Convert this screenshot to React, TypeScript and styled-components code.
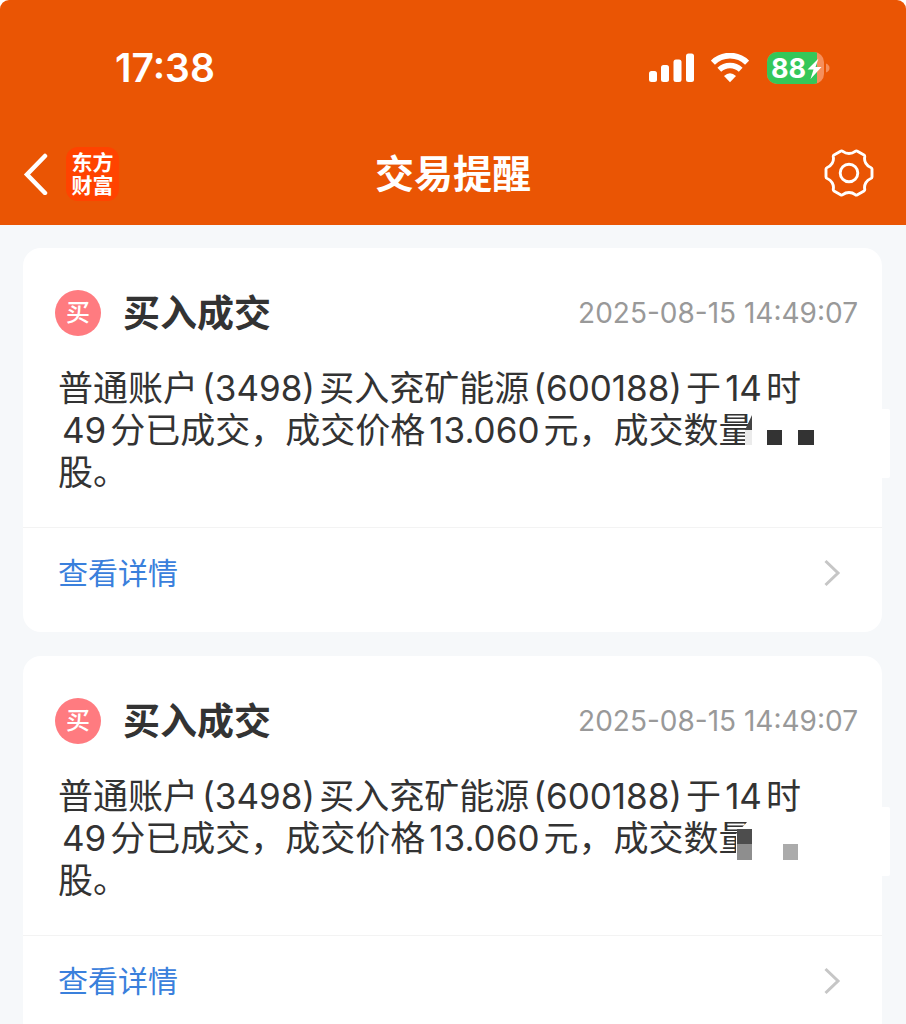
import React from "react";
import styled, { createGlobalStyle } from "styled-components";

const GlobalStyle = createGlobalStyle`
  *, *::before, *::after { box-sizing: border-box; }
  body {
    margin: 0;
    background: #ffffff;
    font-family: Inter, "Noto Sans CJK SC", sans-serif;
    color: #333333;
  }
  h1, h2, p { margin: 0; }
`;

const Page = styled.div`
  display: flex;
  flex-direction: column;
  height: 100vh;
`;

const TopBar = styled.header`
  flex: none;
  background: #ea5504;
  color: #ffffff;
  border-radius: 9px 9px 0 0;
`;

const StatusBar = styled.div`
  display: flex;
  align-items: center;
  justify-content: space-between;
  height: 136px;
  padding: 0 76px 0 115px;
`;

const Clock = styled.time`
  font-size: 39px;
  font-weight: 600;
  line-height: 48px;
`;

const StatusIcons = styled.div`
  display: flex;
  align-items: center;
  gap: 17px;
`;

const NavBar = styled.nav`
  display: grid;
  grid-template-columns: 1fr auto 1fr;
  align-items: center;
  height: 89px;
  padding: 0 32px 14px;
`;

const NavStart = styled.div`
  display: flex;
  align-items: center;
  gap: 17px;
  margin-left: -10px;
`;

const IconButton = styled.button`
  display: flex;
  padding: 0;
  border: 0;
  background: none;
  color: inherit;
  cursor: pointer;
`;

const SettingsButton = styled(IconButton)`
  justify-self: end;
`;

const Logo = styled.div`
  width: 53px;
  height: 54px;
  padding: 3px 5px;
  border-radius: 12px;
  background: #ff4300;
  font-family: "Noto Sans CJK SC", sans-serif;
  font-size: 21px;
  font-weight: 700;
  line-height: 23px;
  text-align: center;
`;

const NavTitle = styled.h1`
  font-size: 39px;
  font-weight: 600;
  line-height: 48px;
`;

const Feed = styled.main`
  display: flex;
  flex: 1;
  flex-direction: column;
  gap: 24px;
  min-height: 0;
  padding: 23px 24px 23px 23px;
  overflow-x: hidden;
  overflow-y: auto;
  scrollbar-width: none;
  background: #f6f8fa;
`;

const Card = styled.article`
  flex: none;
  position: relative;
  border-radius: 18px;
  background: #ffffff;
`;

const CardBody = styled.div`
  padding: 41px 34px 34px 35px;
  border-bottom: 1px solid #f3f3f3;
`;

const CardHead = styled.div`
  display: flex;
  align-items: center;
  margin: 0 -10px 30px -3px;
`;

const Badge = styled.span`
  display: flex;
  align-items: center;
  justify-content: center;
  width: 46px;
  height: 46px;
  margin-right: 22px;
  border-radius: 50%;
  background: #ff7b80;
  color: #ffffff;
  font-size: 24px;
  font-weight: 500;
  line-height: 24px;
`;

const CardTitle = styled.h2`
  flex: 1;
  padding-top: 2px;
  font-size: 37px;
  font-weight: 600;
  line-height: 46px;
`;

const Stamp = styled.time`
  color: #999999;
  font-size: 28px;
  line-height: 46px;
`;

const Message = styled.p`
  font-size: 35px;
  line-height: 42px;
`;

const Latin = styled.span`
  margin: 0 4px;
`;

const CensoredArt = styled.svg`
  width: 96px;
  height: 42px;
  margin-left: -18px;
  overflow: visible;
  vertical-align: top;
`;

const EdgePatch = styled.span<{ $top: number }>`
  position: absolute;
  top: ${({ $top }) => $top}px;
  right: -8px;
  width: 16px;
  height: 69px;
  border-radius: 2px;
  background: #ffffff;
`;

const DetailLink = styled.a`
  display: flex;
  align-items: center;
  justify-content: space-between;
  padding: 24px 40px 38px 35px;
  color: #3a80dc;
  font-size: 30px;
  line-height: 42px;
  text-decoration: none;
`;

const SignalIcon = () => (
  <svg width="46" height="30" viewBox="0 0 46 30" fill="currentColor" aria-hidden="true">
    <rect x="1" y="18" width="8" height="11" rx="2.5" />
    <rect x="13" y="12" width="8" height="17" rx="2.5" />
    <rect x="25.500" y="6.500" width="8" height="22.500" rx="2.5" />
    <rect x="38" y="0.500" width="8" height="28.500" rx="2.5" />
  </svg>
);

const WifiIcon = () => (
  <svg width="38" height="30" viewBox="0 0 38 30" fill="none" stroke="currentColor" aria-hidden="true">
    <path d="M1.900 9.600A24.500 24.500 0 0 1 36.100 9.600" strokeWidth="5.800" />
    <path d="M8.300 16.800A15.400 15.400 0 0 1 29.700 16.800" strokeWidth="5.400" />
    <path d="M19 29.200L13 23Q19 17.500 25 23Z" fill="currentColor" stroke="none" />
  </svg>
);

const BatteryIcon = () => (
  <svg width="64" height="32" viewBox="0 0 64 32" aria-label="88%">
    <clipPath id="battery-shape">
      <rect x="1" width="57" height="32" rx="10" />
    </clipPath>
    <g clipPath="url(#battery-shape)">
      <rect width="58" height="32" fill="#f58f5c" />
      <rect width="51" height="32" fill="#34c759" />
    </g>
    <path d="M60 11.500Q63.500 13 63.500 16T60 20.500Z" fill="#f58f5c" />
    <text x="5" y="25.500" fill="#ffffff" fontSize="27" fontWeight="700" fontFamily="Inter, sans-serif">
      88
    </text>
    <path d="M52.500 6.500L41.500 17.500H47.500L44.500 27L55.500 15H49.500Z" fill="#ffffff" />
  </svg>
);

const BackIcon = () => (
  <svg width="27" height="42" viewBox="0 0 27 42" fill="none" stroke="currentColor" strokeWidth="4.500" strokeLinecap="round" strokeLinejoin="miter" aria-hidden="true">
    <path d="M23 3L5 21.500L23 40" />
  </svg>
);

const GearIcon = () => (
  <svg width="50" height="50" viewBox="-25 -24 50 50" fill="none" stroke="currentColor" strokeWidth="2.900" strokeLinejoin="round" aria-hidden="true">
    <path d="M21.800-5.500Q23-5 23-4V4Q23 5 21.800 5.500A9.500 9.500 0 0 0 15.700 16.100Q15.900 17.400 15 17.900L8 21.900Q7.200 22.400 6.200 21.600A10 10 0 0 0-6.200 21.600Q-7.200 22.400-8 21.900L-15 17.900Q-15.900 17.400-15.700 16.100A9.500 9.500 0 0 0-21.800 5.500Q-23 5-23 4V-4Q-23-5-21.800-5.500A9.500 9.500 0 0 0-15.700-16.100Q-15.900-17.400-15-17.900L-8-21.900Q-7.200-22.400-6.200-21.600A10 10 0 0 0 6.200-21.600Q7.200-22.400 8-21.900L15-17.900Q15.900-17.400 15.700-16.100A9.500 9.500 0 0 0 21.800-5.500Z" />
    <circle r="8.800" />
  </svg>
);

const ForwardIcon = () => (
  <svg width="20" height="30" viewBox="0 0 20 30" fill="none" stroke="#c6c6c6" strokeWidth="3" aria-hidden="true">
    <path d="M3.500 3L16 15L3.500 27" />
  </svg>
);

type Mask = "dark" | "grey";

const Censored = ({ mask }: { mask: Mask }) =>
  mask === "dark" ? (
    <CensoredArt viewBox="0 0 96 42" aria-label="已隐藏">
      <rect x="16" y="5" width="6" height="32" fill="#ffffff" />
      <path d="M9 21L16 6V21Z" fill="#444444" />
      <rect x="9" y="21" width="7" height="15" fill="#ebebeb" />
      <rect x="31" y="21" width="15" height="15" fill="#333333" />
      <rect x="62" y="21" width="16" height="15" fill="#333333" />
    </CensoredArt>
  ) : (
    <CensoredArt viewBox="0 0 96 42" aria-label="已隐藏">
      <path d="M12 4L0 17V38H22V4Z" fill="#ffffff" />
      <rect x="1" y="12" width="15" height="15" fill="#4d4d4d" />
      <rect x="1" y="27" width="15" height="16" fill="#8e8e8e" />
      <rect x="47" y="27" width="15" height="16" fill="#ababab" />
    </CensoredArt>
  );

const spaced = (text: string) =>
  text
    .split(/([\x21-\x7e]+)/)
    .filter(Boolean)
    .map((part, i) => (/^[\x21-\x7e]/.test(part) ? <Latin key={i}>{part}</Latin> : part));

interface Notice {
  id: number;
  time: string;
  message: string;
  mask: Mask;
  patchTop: number;
}

const message = "普通账户(3498)买入兖矿能源(600188)于14时49分已成交，成交价格13.060元，成交数量";

const notices: Notice[] = [
  { id: 1, time: "2025-08-15 14:49:07", message, mask: "dark", patchTop: 161 },
  { id: 2, time: "2025-08-15 14:49:07", message, mask: "grey", patchTop: 151 },
];

const NoticeCard = ({ notice }: { notice: Notice }) => (
  <Card>
    <EdgePatch $top={notice.patchTop} />
    <CardBody>
      <CardHead>
        <Badge>买</Badge>
        <CardTitle>买入成交</CardTitle>
        <Stamp>{notice.time}</Stamp>
      </CardHead>
      <Message>
        {spaced(notice.message)}
        <Censored mask={notice.mask} />
        股。
      </Message>
    </CardBody>
    <DetailLink href="#detail">
      查看详情
      <ForwardIcon />
    </DetailLink>
  </Card>
);

export default function App() {
  return (
    <Page lang="zh-CN">
      <GlobalStyle />
      <TopBar>
        <StatusBar>
          <Clock>17:38</Clock>
          <StatusIcons>
            <SignalIcon />
            <WifiIcon />
            <BatteryIcon />
          </StatusIcons>
        </StatusBar>
        <NavBar>
          <NavStart>
            <IconButton type="button" aria-label="返回">
              <BackIcon />
            </IconButton>
            <Logo>东方财富</Logo>
          </NavStart>
          <NavTitle>交易提醒</NavTitle>
          <SettingsButton type="button" aria-label="设置">
            <GearIcon />
          </SettingsButton>
        </NavBar>
      </TopBar>
      <Feed>
        {notices.map((notice) => (
          <NoticeCard key={notice.id} notice={notice} />
        ))}
      </Feed>
    </Page>
  );
}
